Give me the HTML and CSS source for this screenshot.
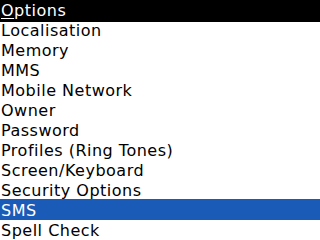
FILE: index.html
```html
<!DOCTYPE html>
<html>
<head>
<meta charset="utf-8">
<link rel="stylesheet" href="styles.css">
</head>
<body>
<div class="screen">
  <div class="title"><span class="mnemonic">O</span>ptions</div>
  <ul class="list">
    <li class="item">Localisation</li>
    <li class="item">Memory</li>
    <li class="item">MMS</li>
    <li class="item">Mobile Network</li>
    <li class="item">Owner</li>
    <li class="item">Password</li>
    <li class="item">Profiles (Ring Tones)</li>
    <li class="item">Screen/Keyboard</li>
    <li class="item">Security Options</li>
    <li class="item selected">SMS</li>
    <li class="item">Spell Check</li>
  </ul>
</div>
</body>
</html>
```

FILE: styles.css
```css
html, body {
  margin: 0;
  padding: 0;
  background: #ffffff;
}
.screen {
  width: 320px;
  height: 240px;
  overflow: hidden;
  font-family: "DejaVu Sans", sans-serif;
  font-size: 16px;
  letter-spacing: 0.5px;
  line-height: 20px;
  color: #000000;
}
.title {
  box-sizing: border-box;
  height: 20px;
  padding: 1px 0 0 1px;
  background: #000000;
  color: #ffffff;
  box-shadow: 0 2px 0 #000000;
  position: relative;
  z-index: 1;
}
.mnemonic {
  text-decoration: underline;
  text-underline-offset: 2px;
}
.list {
  list-style: none;
  margin: 0;
  padding: 0;
}
.item {
  box-sizing: border-box;
  height: 20px;
  padding: 1px 0 0 1px;
  white-space: nowrap;
}
.selected {
  background: #1a5bb8;
  color: #ffffff;
  box-shadow: 0 -1px 0 #1a5bb8;
}
```
